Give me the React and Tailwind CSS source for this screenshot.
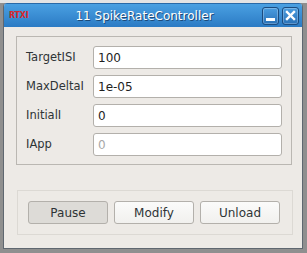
import React from 'react';

const fields = [
    { label: 'TargetISI', value: '100' },
    { label: 'MaxDeltaI', value: '1e-05' },
    { label: 'InitialI', value: '0' },
    { label: 'IApp', value: '0', placeholder: true },
];

const TitleButton = ({ children }) => (
    <div className="w-[17px] h-[18px] rounded-[3px] border border-[#1b4c80] bg-gradient-to-b from-[#4b9de0] to-[#2a72b8] flex items-center justify-center shadow-[inset_0_0_0_1px_rgba(255,255,255,0.25)]">
        {children}
    </div>
);

const App = () => {
    return (
        <div className="w-[307px] h-[253px] bg-[#8f8f8f] flex flex-col overflow-hidden font-['DejaVu_Sans',sans-serif]">
            <div className="h-[3px] bg-[#e4e4e4] shrink-0" />
            <div className="flex pl-[3px]">
                <div className="w-[300px] h-[246px] flex flex-col rounded-t-[4px] overflow-hidden bg-[#edeae6] border-x border-b border-[#5f6770]">
                    {/* title bar */}
                    <div className="h-[24px] shrink-0 flex items-center bg-gradient-to-b from-[#4aa0e2] to-[#2b7bc4] border-t border-[#2a6aa8] relative">
                        <span className="absolute left-[5px] top-[8px] text-[8px] leading-none font-semibold text-[#d8272b] tracking-tight">RTXI</span>
                        <div className="flex-1 text-center text-white text-[12px] pl-[23px] pt-[1px] [text-shadow:1px_1px_0_#1d4a78]">
                            11 SpikeRateController
                        </div>
                        <div className="flex gap-[3px] pr-[3px]">
                            <TitleButton>
                                <div className="w-[9px] h-[3px] bg-white mt-[7px]" />
                            </TitleButton>
                            <TitleButton>
                                <svg width="11" height="11" viewBox="0 0 11 11">
                                    <path d="M2 2 L9 9 M9 2 L2 9" stroke="white" strokeWidth="2.4" strokeLinecap="square" />
                                </svg>
                            </TitleButton>
                        </div>
                    </div>

                    {/* parameters */}
                    <div className="ml-[12px] mt-[9px] w-[276px] border border-[#bab7b2] pt-[9px] pb-[8px] px-[9px] grid grid-cols-[62px_1fr] gap-x-[5px] gap-y-[6px]">
                        {fields.map((f) => (
                            <React.Fragment key={f.label}>
                                <div className="h-[23px] flex items-center text-[11.5px] text-[#2e3436]">{f.label}</div>
                                <div className={`h-[23px] flex items-center rounded-[3px] border border-[#b3b0ab] bg-white px-[4px] text-[12px] ${f.placeholder ? 'text-[#a8a8a8]' : 'text-[#1e1e1e]'}`}>
                                    {f.value}
                                </div>
                            </React.Fragment>
                        ))}
                    </div>

                    {/* buttons */}
                    <div className="ml-[13px] mt-[25px] w-[276px] border border-[#dcd9d4] py-[10px] pl-[10px] flex gap-[6px]">
                        <button className="w-[80px] h-[23px] rounded-[3px] border border-[#b3b0ab] bg-[#dddbd7] text-[12px] text-[#2e3436]">Pause</button>
                        <button className="w-[80px] h-[23px] rounded-[3px] border border-[#b3b0ab] bg-gradient-to-b from-[#fbfbfa] to-[#f1f0ee] text-[12px] text-[#2e3436]">Modify</button>
                        <button className="w-[80px] h-[23px] rounded-[3px] border border-[#b3b0ab] bg-gradient-to-b from-[#fbfbfa] to-[#f1f0ee] text-[12px] text-[#2e3436]">Unload</button>
                    </div>
                </div>
            </div>
        </div>
    );
};

export default App;
